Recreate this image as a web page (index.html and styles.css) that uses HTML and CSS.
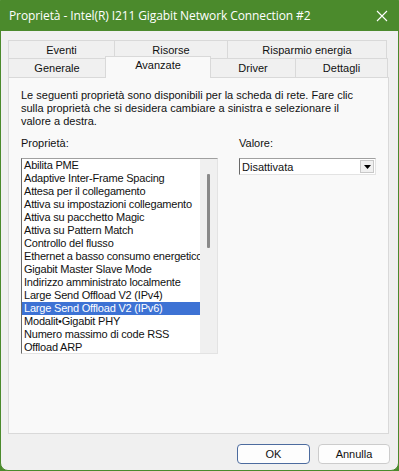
FILE: index.html
```html
<html>
<head>
<meta charset="utf-8">
<link rel="stylesheet" href="styles.css">
<title>Proprietà - Intel(R) I211 Gigabit Network Connection #2</title>
</head>
<body>
<div class="window">
    <div class="titleBar">
        <span class="titleText">Proprietà - Intel(R) I211 Gigabit Network Connection #2</span>
        <svg class="closeIcon" width="12" height="12" viewBox="0 0 12 12">
            <path d="M1 1 L11 11 M11 1 L1 11" stroke="white" stroke-width="1.1" fill="none"/>
        </svg>
    </div>
    <div class="content">
        <div class="tabs">
            <div class="tabRow">
                <div class="tab w107">Eventi</div>
                <div class="tab w113">Risorse</div>
                <div class="tab w160">Risparmio energia</div>
            </div>
            <div class="tabRow">
                <div class="tab w98">Generale</div>
                <div class="tab w105 selected">Avanzate</div>
                <div class="tab w85">Driver</div>
                <div class="tab w92">Dettagli</div>
            </div>
        </div>
        <div class="panel">
            <p class="description">Le seguenti proprietà sono disponibili per la scheda di rete. Fare clic sulla proprietà che si desidera cambiare a sinistra e selezionare il valore a destra.</p>
            <div class="columns">
                <div class="leftColumn">
                    <div class="label">Proprietà:</div>
                    <div class="listBox">
                        <div class="items">
                            <div class="item">Abilita PME</div>
                            <div class="item">Adaptive Inter-Frame Spacing</div>
                            <div class="item">Attesa per il collegamento</div>
                            <div class="item">Attiva su impostazioni collegamento</div>
                            <div class="item">Attiva su pacchetto Magic</div>
                            <div class="item">Attiva su Pattern Match</div>
                            <div class="item">Controllo del flusso</div>
                            <div class="item">Ethernet a basso consumo energetico</div>
                            <div class="item">Gigabit Master Slave Mode</div>
                            <div class="item">Indirizzo amministrato localmente</div>
                            <div class="item">Large Send Offload V2 (IPv4)</div>
                            <div class="item active">Large Send Offload V2 (IPv6)</div>
                            <div class="item">Modalit&#8226;Gigabit PHY</div>
                            <div class="item">Numero massimo di code RSS</div>
                            <div class="item">Offload ARP</div>
                        </div>
                        <div class="scrollBar"><div class="thumb"></div></div>
                    </div>
                </div>
                <div class="rightColumn">
                    <div class="label">Valore:</div>
                    <div class="comboBox">
                        <span class="comboText">Disattivata</span>
                        <span class="comboButton">
                            <svg width="7" height="4" viewBox="0 0 7 4"><path d="M0 0 H7 L3.5 4 Z" fill="black"/></svg>
                        </span>
                    </div>
                </div>
            </div>
        </div>
        <div class="buttons">
            <div class="button default">OK</div>
            <div class="button">Annulla</div>
        </div>
    </div>
</div>
</body>
</html>
```

FILE: styles.css
```css
body {margin: 0;
      background-color: #4b8a2c;
      font-family: "Liberation Sans", Arial, sans-serif;
      font-size: 11px;
      color: #111}
.window {width: 399px;
         height: 471px;
         box-sizing: border-box;
         border: 1px solid #4b8a2c;
         border-radius: 0 0 8px 8px;
         background-color: #f0f0f0;
         display: flex;
         flex-direction: column;
         overflow: hidden}
.titleBar {height: 29px;
           background-color: #4b8a2c;
           display: flex;
           align-items: center;
           padding: 0 10px 1px 8px;
           color: white}
.titleText {flex: 1;
            font-family: "Open Sans", sans-serif;
            font-size: 12px;
            letter-spacing: -0.1px}
.content {padding: 9px 9px 0 7px;
          display: flex;
          flex-direction: column}
.tabRow {display: flex;
         height: 18px}
.tabRow + .tabRow {height: 19px}
.tab {box-sizing: border-box;
      border: 1px solid #d9d9d9;
      border-bottom: none;
      margin-left: -1px;
      text-align: center;
      line-height: 18px;
      background-color: #f0f0f0}
.tab:first-child {margin-left: 0}
.w107 {width: 107px}
.w113 {width: 114px}
.w160 {width: 160px}
.w98 {width: 98px}
.w105 {width: 106px}
.w85 {width: 86px}
.w92 {width: 93px}
.selected {background-color: #f9f9f9;
           margin-top: -2px;
           height: 22px;
           line-height: 16px;
           position: relative;
           z-index: 1}
.panel {height: 357px;
        box-sizing: border-box;
        border: 1px solid #d9d9d9;
        background-color: #f9f9f9;
        padding: 11px 12px 0 12px}
.description {margin: 0;
              line-height: 13px;
              width: 340px}
.columns {display: flex;
          margin-top: 9px}
.leftColumn {width: 197px}
.rightColumn {margin-left: 21px;
              width: 137px}
.label {line-height: 13px;
        height: 13px;
        margin-bottom: 8px}
.listBox {height: 196px;
          box-sizing: border-box;
          border-top: 1px solid #a0a0a0;
          border-left: 1px solid #696969;
          border-right: 1px solid #e3e3e3;
          border-bottom: 1px solid #e3e3e3;
          background-color: white;
          display: flex;
          overflow: hidden}
.items {flex: 1;
        overflow: hidden}
.item {height: 13px;
       line-height: 13px;
       padding-left: 2px;
       letter-spacing: -0.2px;
       white-space: nowrap;
       overflow: hidden}
.active {background-color: #3d72d4;
         color: white}
.scrollBar {width: 17px;
            background-color: #f0f0f0;
            display: flex;
            justify-content: center;
            padding-top: 15px}
.thumb {width: 3px;
        height: 74px;
        background-color: #8a8a8a;
        border-radius: 1px}
.comboBox {height: 17px;
           box-sizing: border-box;
           border-top: 1px solid #a0a0a0;
           border-left: 1px solid #696969;
           border-right: 1px solid #e3e3e3;
           border-bottom: 1px solid #e3e3e3;
           background-color: white;
           display: flex;
           align-items: center}
.comboText {flex: 1;
            padding-left: 2px}
.comboButton {width: 14px;
              height: 13px;
              margin-right: 1px;
              box-sizing: border-box;
              border: 1px solid #c8c8c8;
              background-color: #f0f0f0;
              display: flex;
              align-items: center;
              justify-content: center}
.buttons {display: flex;
          justify-content: flex-end;
          margin-top: 10px;
          gap: 8px;
          margin-right: -1px}
.button {width: 72px;
         height: 20px;
         box-sizing: border-box;
         border: 1px solid #cccccc;
         border-radius: 4px;
         background-color: #fdfdfd;
         text-align: center;
         line-height: 18px}
.default {width: 73px;
          border-color: #4c6b9e}
```
